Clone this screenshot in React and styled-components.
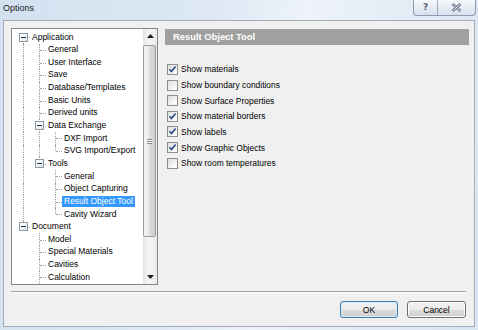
import React from 'react'
import styled, { createGlobalStyle, css } from 'styled-components'

const GlobalStyle = createGlobalStyle`
  html, body {
    margin: 0;
    padding: 0;
  }
  body {
    width: 478px;
    height: 330px;
    overflow: hidden;
    font-family: "Liberation Sans", Arial, sans-serif;
    color: #000;
  }
`

const ROW_H = 12.65

// "more" marks a branch whose siblings continue below the visible area
const tree = [
  {
    label: 'Application',
    children: [
      { label: 'General' },
      { label: 'User Interface' },
      { label: 'Save' },
      { label: 'Database/Templates' },
      { label: 'Basic Units' },
      { label: 'Derived units' },
      {
        label: 'Data Exchange',
        children: [{ label: 'DXF Import' }, { label: 'SVG Import/Export' }],
      },
      {
        label: 'Tools',
        children: [
          { label: 'General' },
          { label: 'Object Capturing' },
          { label: 'Result Object Tool', selected: true },
          { label: 'Cavity Wizard' },
        ],
      },
    ],
  },
  {
    label: 'Document',
    children: [
      { label: 'Model' },
      { label: 'Special Materials' },
      { label: 'Cavities' },
      { label: 'Calculation', more: true },
    ],
  },
]

const options = [
  { label: 'Show materials', checked: true },
  { label: 'Show boundary conditions', checked: false },
  { label: 'Show Surface Properties', checked: false },
  { label: 'Show material borders', checked: true },
  { label: 'Show labels', checked: true },
  { label: 'Show Graphic Objects', checked: true },
  { label: 'Show room temperatures', checked: false },
]

function flatten(nodes, guides = [], root = true) {
  const rows = []
  nodes.forEach((node, i) => {
    const last = i === nodes.length - 1 && !node.more
    rows.push({
      label: node.label,
      selected: node.selected,
      guides,
      last,
      first: root && i === 0,
      expanded: !!node.children,
    })
    if (node.children) {
      rows.push(...flatten(node.children, [...guides, !last], false))
    }
  })
  return rows
}

const Window = styled.div`
  width: 478px;
  height: 330px;
  box-sizing: border-box;
  display: flex;
  flex-direction: column;
  padding: 0 3px 3px 3px;
  background: linear-gradient(100deg, #d3e1f0 0%, #dde8f4 40%, #eef3f9 58%, #e4ecf6 75%, #d9e5f2 100%);
`

const TitleBar = styled.div`
  height: 20px;
  display: flex;
  justify-content: space-between;
  align-items: flex-start;
`

const Title = styled.span`
  font-size: 9px;
  line-height: 17px;
  color: #1b1b1b;
`

const CaptionButtons = styled.div`
  display: flex;
  height: 15px;
  margin-right: -1px;
  border: 1px solid #8c9cb1;
  border-top: none;
  border-radius: 0 0 4px 4px;
  overflow: hidden;
  background: linear-gradient(#f6f8fb, #e3e9f1 60%, #d9e1ec);
`

const CaptionButton = styled.div`
  width: ${p => p.$w}px;
  display: flex;
  align-items: center;
  justify-content: center;
  & + & {
    border-left: 1px solid #9eabbd;
  }
`

const HelpGlyph = styled.span`
  font-family: "DejaVu Sans", sans-serif;
  font-weight: bold;
  font-size: 9px;
  color: #56657a;
  line-height: 1;
`

const Client = styled.div`
  flex: 1;
  display: flex;
  flex-direction: column;
  background: #f0f0f0;
  border: 1px solid #a3acb8;
  padding: 7px 8px 8px 7px;
`

const Main = styled.div`
  display: flex;
  gap: 7px;
  height: 257px;
`

const TreeBox = styled.div`
  width: 147px;
  box-sizing: border-box;
  border: 1px solid #828790;
  background: #fff;
  display: flex;
`

const TreeBody = styled.div`
  flex: 1;
  overflow: hidden;
  padding: 2px 0 0 3px;
`

const Row = styled.div`
  display: flex;
  height: ${ROW_H}px;
  align-items: center;
`

const dotted = css`
  content: '';
  position: absolute;
  border: 0 dotted #a0a0a0;
`

const Guide = styled.div`
  width: 16px;
  height: 100%;
  flex-shrink: 0;
  position: relative;
  ${p => p.$on && css`
    &::before {
      ${dotted};
      left: 8px;
      top: 0;
      bottom: 0;
      border-left-width: 1px;
    }
  `}
`

const Branch = styled.div`
  width: 16px;
  height: 100%;
  flex-shrink: 0;
  position: relative;
  &::before {
    ${dotted};
    left: 8px;
    top: ${p => (p.$first ? '50%' : '0')};
    bottom: ${p => (p.$last ? '50%' : '0')};
    border-left-width: 1px;
  }
  &::after {
    ${dotted};
    left: 9px;
    right: 1px;
    top: 50%;
    border-top-width: 1px;
  }
`

const Expander = styled.div`
  position: absolute;
  z-index: 1;
  left: 4px;
  top: 50%;
  margin-top: -4.5px;
  width: 9px;
  height: 9px;
  box-sizing: border-box;
  border: 1px solid #8f9aa7;
  background: linear-gradient(135deg, #ffffff 30%, #d8dde3);
  &::after {
    content: '';
    position: absolute;
    left: 1px;
    top: 3px;
    width: 5px;
    height: 1px;
    background: #1e2f4e;
  }
`

const Label = styled.span`
  margin-left: -1px;
  padding: 0 2px;
  font-size: 8.5px;
  line-height: 11.5px;
  white-space: nowrap;
  ${p => p.$selected && css`
    background: #3399ff;
    color: #fff;
  `}
`

const ScrollBar = styled.div`
  width: 14px;
  flex-shrink: 0;
  display: flex;
  flex-direction: column;
  background: linear-gradient(90deg, #e3e3e3, #f2f2f2 30%, #f2f2f2 70%, #e9e9e9);
`

const Arrow = styled.div`
  height: 14px;
  display: flex;
  align-items: center;
  justify-content: center;
`

const Track = styled.div`
  flex: 1;
  display: flex;
  flex-direction: column;
  padding: 2px 0 0 0;
`

const Thumb = styled.div`
  height: 192px;
  margin: 0 1px 0 0;
  box-sizing: border-box;
  border: 1px solid #9b9b9b;
  border-radius: 2px;
  background: linear-gradient(90deg, #f4f4f4, #e9e9e9 45%, #dadada 55%, #cfcfcf);
  display: flex;
  align-items: center;
  justify-content: center;
`

const Grip = styled.div`
  width: 5px;
  height: 5px;
  background: repeating-linear-gradient(#8a8a8a 0 1px, #f8f8f8 1px 2px);
`

const Panel = styled.div`
  flex: 1;
  margin-right: -3px;
  padding-top: 1px;
  display: flex;
  flex-direction: column;
`

const PanelHeader = styled.div`
  height: 16px;
  background: #a0a0a0;
  color: #fff;
  font-weight: bold;
  font-size: 9.4px;
  line-height: 16px;
  padding-left: 8px;
`

const CheckList = styled.div`
  margin-top: 16.6px;
  padding-left: 2px;
  display: flex;
  flex-direction: column;
`

const CheckRow = styled.label`
  height: 15.65px;
  display: flex;
  align-items: center;
  font-size: 8.45px;
`

const Box = styled.span`
  width: 11px;
  height: 11px;
  box-sizing: border-box;
  margin-right: 3px;
  border: 1px solid #8e8f8f;
  background: linear-gradient(135deg, #dcdcdc, #f7f7f7 70%, #ffffff);
  display: flex;
  align-items: center;
  justify-content: center;
`

const Separator = styled.div`
  margin-top: 6px;
  height: 1px;
  border-top: 1px solid #a0a0a0;
  background: #fff;
`

const Buttons = styled.div`
  margin-top: 8px;
  display: flex;
  justify-content: flex-end;
  gap: 9px;
`

const Button = styled.div`
  width: ${p => p.$w}px;
  height: 17px;
  box-sizing: border-box;
  border: 1px solid ${p => (p.$default ? '#3c7fb1' : '#707070')};
  border-radius: 3px;
  background: linear-gradient(#f2f2f2 0%, #ebebeb 50%, #dddddd 50%, #cfcfcf 100%);
  font-size: 8.5px;
  display: flex;
  align-items: center;
  justify-content: center;
  box-shadow: inset 0 0 0 1px ${p => (p.$default ? '#d3ebf8' : '#fbfbfb')};
`

function CloseGlyph() {
  return (
    <svg width="11" height="9" viewBox="0 0 11 9">
      <path d="M1.5 1 L9.5 8 M9.5 1 L1.5 8" stroke="#5d6c80" strokeWidth="2.6" fill="none" />
      <path d="M1.5 1 L9.5 8 M9.5 1 L1.5 8" stroke="#eef2f7" strokeWidth="1" fill="none" />
    </svg>
  )
}

function TriangleUp() {
  return (
    <svg width="7" height="4" viewBox="0 0 7 4">
      <path d="M0 4 L3.5 0 L7 4 Z" fill="#202020" />
    </svg>
  )
}

function TriangleDown() {
  return (
    <svg width="7" height="4" viewBox="0 0 7 4">
      <path d="M0 0 L3.5 4 L7 0 Z" fill="#202020" />
    </svg>
  )
}

function Check() {
  return (
    <svg width="9" height="9" viewBox="0 0 9 9">
      <path d="M1.5 4.2 L3.5 6.6 L7.6 1.4" stroke="#2f4a86" strokeWidth="1.6" fill="none" />
    </svg>
  )
}

function Tree() {
  const rows = flatten(tree)
  return (
    <TreeBox>
      <TreeBody>
        {rows.map((r, i) => (
          <Row key={i}>
            {r.guides.map((on, j) => <Guide key={j} $on={on} />)}
            <Branch $first={r.first} $last={r.last}>
              {r.expanded && <Expander />}
            </Branch>
            <Label $selected={r.selected}>{r.label}</Label>
          </Row>
        ))}
      </TreeBody>
      <ScrollBar>
        <Arrow><TriangleUp /></Arrow>
        <Track>
          <Thumb><Grip /></Thumb>
        </Track>
        <Arrow><TriangleDown /></Arrow>
      </ScrollBar>
    </TreeBox>
  )
}

export default function App() {
  return (
    <Window>
      <GlobalStyle />
      <TitleBar>
        <Title>Options</Title>
        <CaptionButtons>
          <CaptionButton $w={23}><HelpGlyph>?</HelpGlyph></CaptionButton>
          <CaptionButton $w={37}><CloseGlyph /></CaptionButton>
        </CaptionButtons>
      </TitleBar>
      <Client>
        <Main>
          <Tree />
          <Panel>
            <PanelHeader>Result Object Tool</PanelHeader>
            <CheckList>
              {options.map(o => (
                <CheckRow key={o.label}>
                  <Box>{o.checked && <Check />}</Box>
                  {o.label}
                </CheckRow>
              ))}
            </CheckList>
          </Panel>
        </Main>
        <Separator />
        <Buttons>
          <Button $w={58} $default>OK</Button>
          <Button $w={59}>Cancel</Button>
        </Buttons>
      </Client>
    </Window>
  )
}
